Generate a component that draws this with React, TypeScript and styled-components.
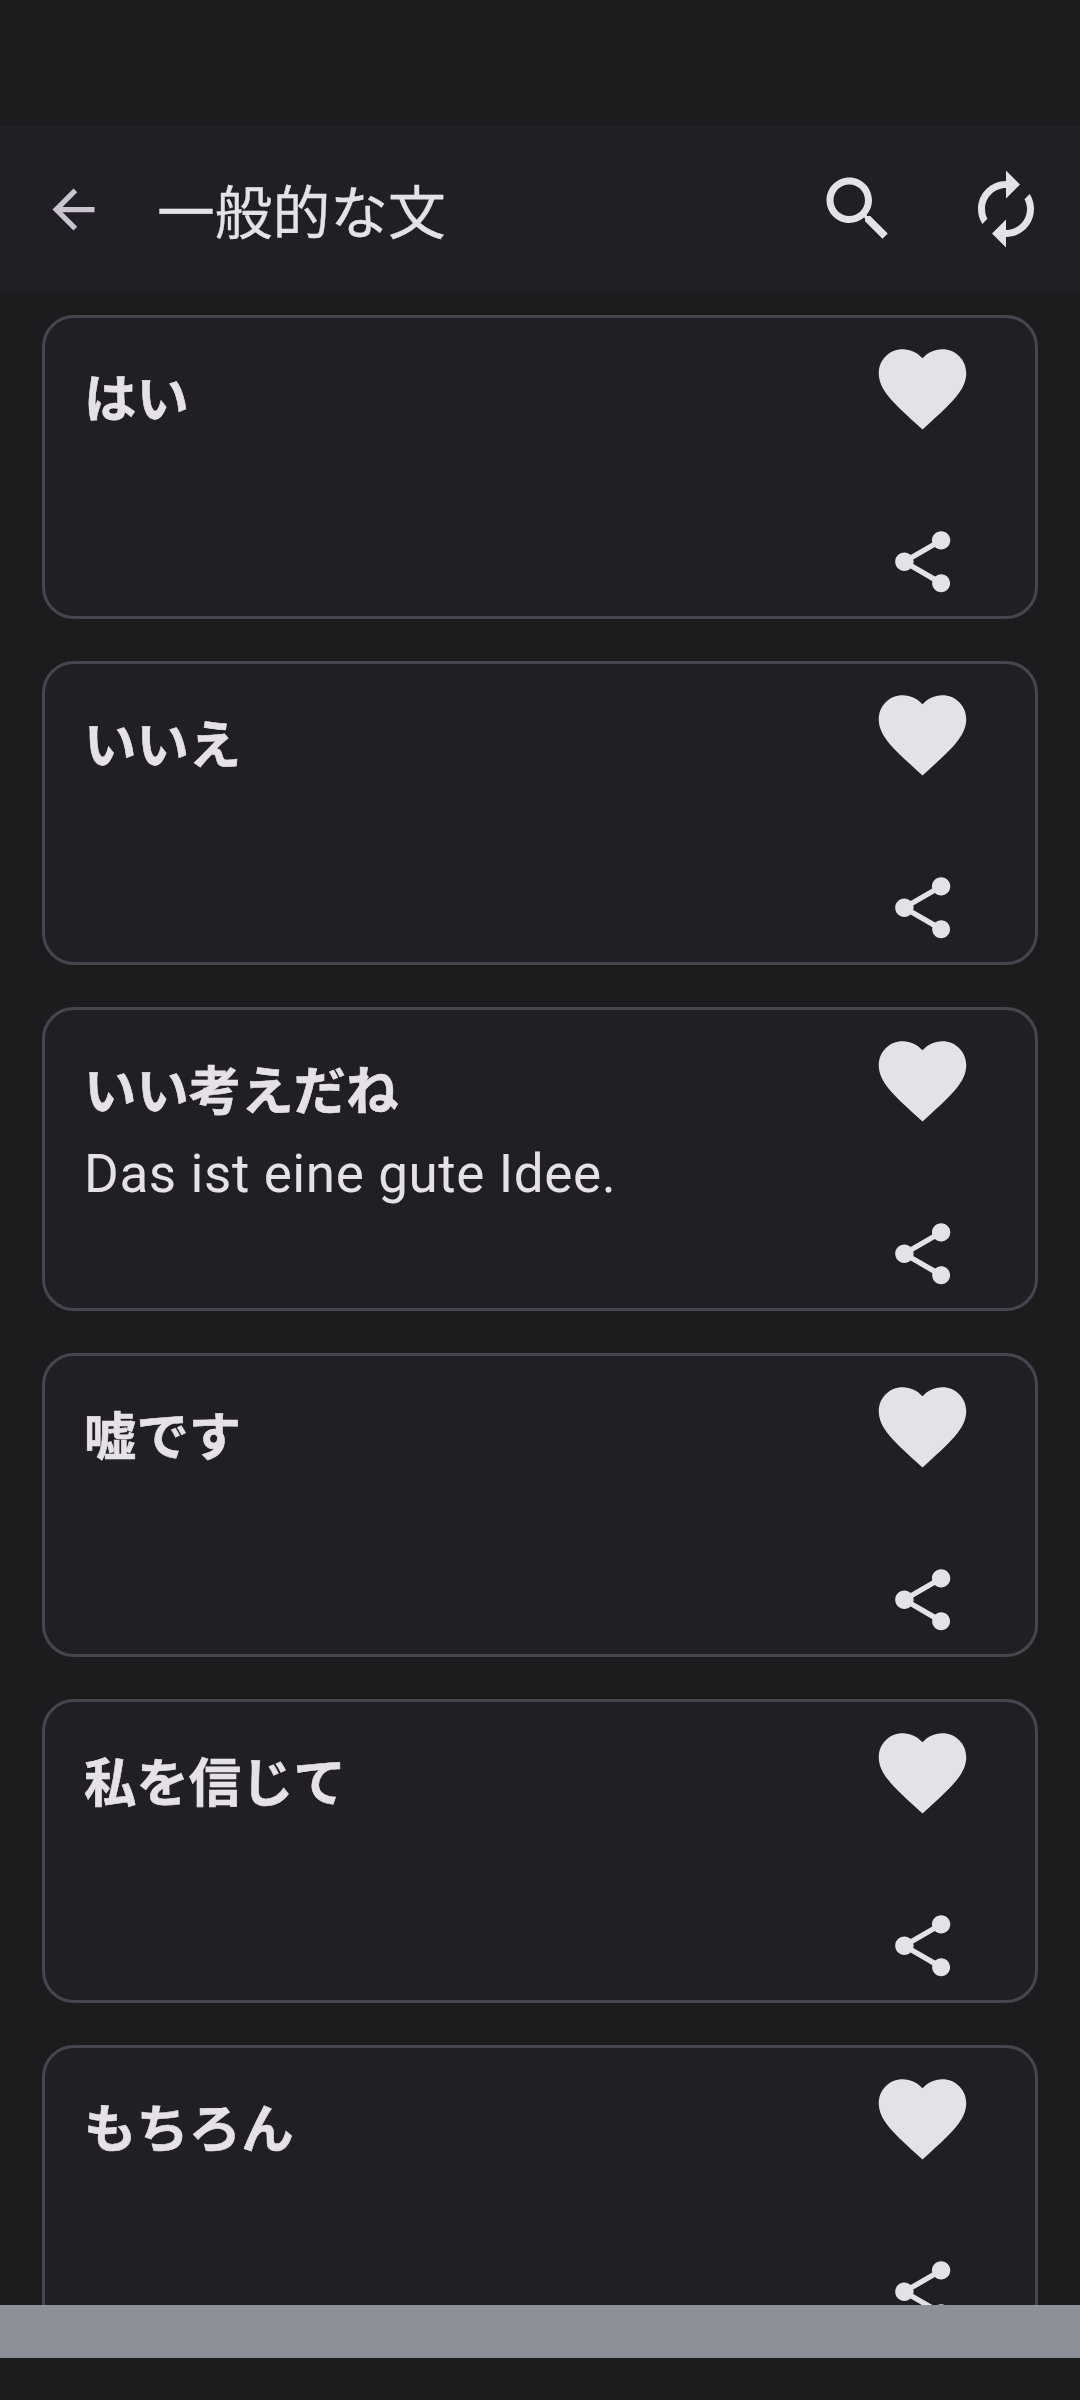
import React from "react";
import styled, { createGlobalStyle } from "styled-components";

const GlobalStyle = createGlobalStyle`
  * { box-sizing: border-box; }
  body { margin: 0; background: #1a1c1e; }
`;

const Screen = styled.div`
  display: flex;
  flex-direction: column;
  width: 1080px;
  height: 2400px;
  padding-top: 126px;
  overflow: hidden;
  background: #1a1c1e;
  font-family: Roboto, "Noto Sans CJK JP", sans-serif;
`;

const AppBar = styled.header`
  display: flex;
  align-items: center;
  flex: 0 0 168px;
  padding: 0 32px 2px 42px;
  background: #211f26;
`;

const Title = styled.h1`
  flex: 1;
  margin: 0 0 0 52px;
  color: #e3e2e6;
  font-family: "Noto Sans CJK JP", sans-serif;
  font-size: 57.75px;
  font-weight: 400;
  line-height: 84px;
  -webkit-text-stroke: 0.3px currentColor;
`;

const Actions = styled.div`
  display: flex;
  gap: 64px;
`;

const IconButton = styled.button<{ $size: number; $color?: string }>`
  display: block;
  width: ${(p) => p.$size}px;
  height: ${(p) => p.$size}px;
  padding: 0;
  border: 0;
  background: none;
  color: ${(p) => p.$color ?? "#e3e2e6"};

  svg {
    display: block;
    width: 100%;
    height: 100%;
    fill: currentColor;
  }
`;

const List = styled.main`
  display: flex;
  flex: 1;
  flex-direction: column;
  gap: 42px;
  min-height: 0;
  padding: 21px 42px 0;
  overflow: hidden;
`;

const Card = styled.article`
  display: flex;
  flex: 0 0 304px;
  justify-content: space-between;
  padding: 18px 60px 17.5px 39px;
  border: 3px solid #49454f;
  border-radius: 32px;
  background: #211f26;
`;

const Texts = styled.div`
  display: flex;
  flex-direction: column;
  padding-top: 21px;
  color: #e6e0e9;
`;

const Phrase = styled.h2`
  margin: 0;
  font-family: "Noto Sans CJK JP", sans-serif;
  font-size: 52.4px;
  font-weight: 700;
  line-height: 76px;
  -webkit-text-stroke: 0.6px currentColor;
`;

const Translation = styled.p`
  margin: 13px 0 0;
  font-size: 53px;
  letter-spacing: 0.6px;
  line-height: 72px;
`;

const CardActions = styled.div`
  display: flex;
  flex-direction: column;
  align-items: center;
  justify-content: space-between;
`;

const BottomBanner = styled.div`
  flex: 0 0 53px;
  background: #8e9099;
`;

const NavigationArea = styled.div`
  flex: 0 0 42px;
`;

const paths = {
  back: "M20 11H7.83l5.59-5.59L12 4l-8 8 8 8 1.41-1.41L7.83 13H20v-2z",
  search:
    "M15.5 14h-.79l-.28-.27C15.41 12.59 16 11.11 16 9.5 16 5.91 13.09 3 9.5 3S3 5.91 3 9.5 5.91 16 9.5 16c1.61 0 3.09-.59 4.23-1.57l.27.28v.79l5 4.99L20.49 19l-4.99-5zm-6 0C7.01 14 5 11.99 5 9.5S7.01 5 9.5 5 14 7.01 14 9.5 11.99 14 9.5 14z",
  renew:
    "M12 6v3l4-4-4-4v3c-4.42 0-8 3.58-8 8 0 1.57.46 3.03 1.24 4.26L6.7 14.8c-.45-.83-.7-1.79-.7-2.8 0-3.31 2.69-6 6-6zm6.76 1.74L17.3 9.2c.44.84.7 1.79.7 2.8 0 3.31-2.69 6-6 6v-3l-4 4 4 4v-3c4.42 0 8-3.58 8-8 0-1.57-.46-3.03-1.24-4.26z",
  heart:
    "M12 21.35l-1.45-1.32C5.4 15.36 2 12.28 2 8.5 2 5.42 4.42 3 7.5 3c1.74 0 3.41.81 4.5 2.09C13.09 3.81 14.76 3 16.5 3 19.58 3 22 5.42 22 8.5c0 3.78-3.4 6.86-8.55 11.54L12 21.35z",
  share:
    "M18 16.08c-.76 0-1.44.3-1.96.77L8.91 12.7c.05-.23.09-.46.09-.7s-.04-.47-.09-.7l7.05-4.11c.54.5 1.25.81 2.04.81 1.66 0 3-1.34 3-3s-1.34-3-3-3-3 1.34-3 3c0 .24.04.47.09.7L8.04 9.81C7.5 9.31 6.79 9 6 9c-1.66 0-3 1.34-3 3s1.34 3 3 3c.79 0 1.5-.31 2.04-.81l7.12 4.16c-.05.21-.08.43-.08.65 0 1.61 1.31 2.92 2.92 2.92s2.92-1.31 2.92-2.92-1.31-2.92-2.92-2.92z",
};

function Icon({ name }: { name: keyof typeof paths }) {
  return (
    <svg viewBox="0 0 24 24" aria-hidden="true">
      <path d={paths[name]} />
    </svg>
  );
}

const phrases: { text: string; translation?: string }[] = [
  { text: "はい" },
  { text: "いいえ" },
  { text: "いい考えだね", translation: "Das ist eine gute Idee." },
  { text: "嘘です" },
  { text: "私を信じて" },
  { text: "もちろん" },
];

export default function App() {
  return (
    <Screen lang="ja">
      <GlobalStyle />
      <AppBar>
        <IconButton $size={63} $color="#cac4d0">
          <Icon name="back" />
        </IconButton>
        <Title>一般的な文</Title>
        <Actions>
          <IconButton $size={84}>
            <Icon name="search" />
          </IconButton>
          <IconButton $size={84}>
            <Icon name="renew" />
          </IconButton>
        </Actions>
      </AppBar>
      <List>
        {phrases.map((p) => (
          <Card key={p.text}>
            <Texts>
              <Phrase>{p.text}</Phrase>
              {p.translation && <Translation lang="de">{p.translation}</Translation>}
            </Texts>
            <CardActions>
              <IconButton $size={105}>
                <Icon name="heart" />
              </IconButton>
              <IconButton $size={73.5}>
                <Icon name="share" />
              </IconButton>
            </CardActions>
          </Card>
        ))}
      </List>
      <BottomBanner />
      <NavigationArea />
    </Screen>
  );
}
